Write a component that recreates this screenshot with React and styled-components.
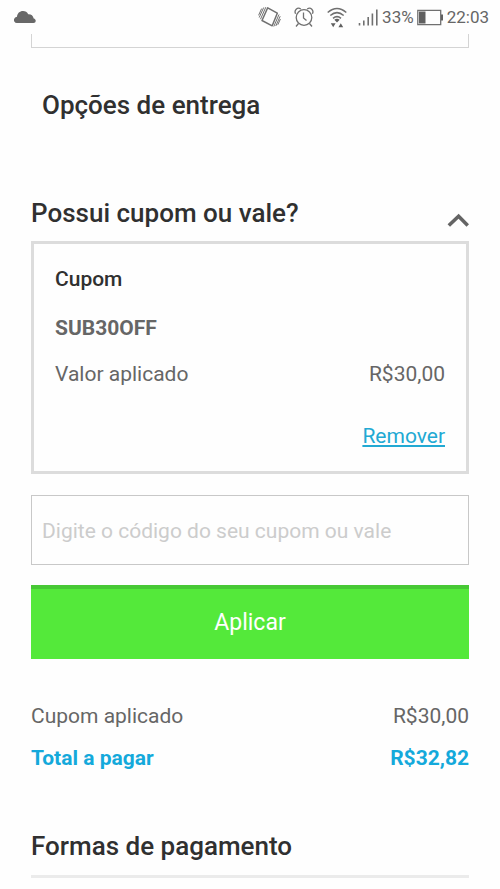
import React, { useState } from 'react';
import styled, { createGlobalStyle } from 'styled-components';

const GlobalStyle = createGlobalStyle`
  * {
    box-sizing: border-box;
  }
  body {
    margin: 0;
    background-color: #fefefe;
    color: #666;
    font-family: Roboto, 'Liberation Sans', sans-serif;
    font-size: 21px;
    line-height: 28px;
  }
`;

const Container = styled.div`
  overflow: hidden;
`;

const StatusBar = styled.header`
  display: flex;
  align-items: center;
  justify-content: space-between;
  height: 34px;
  padding: 0 11px 0 14px;
  font-size: 17px;
  line-height: 20px;
`;

const StatusIcons = styled.div`
  display: flex;
  align-items: center;
`;

const Icon = styled.svg`
  display: block;
  flex: none;
  margin-right: ${(props) => props.$gap || 0}px;
  fill: none;
  stroke: #707070;
`;

const BatteryLevel = styled.span`
  margin-right: 3px;
`;

const Content = styled.main`
  padding: 0 31px;
`;

const AddressEnd = styled.div`
  height: 14px;
  margin-bottom: 41px;
  border: 1px solid #d4d4d4;
  border-top: none;
`;

const Title = styled.h2`
  margin: 0;
  padding-left: ${(props) => (props.$inset ? '11px' : 0)};
  color: #303030;
  font-size: 26px;
  font-weight: 500;
  line-height: 32px;
`;

const CouponHeader = styled.div`
  display: flex;
  align-items: center;
  justify-content: space-between;
  margin: 76px 0 12px;
`;

const ToggleButton = styled.button`
  display: flex;
  padding: 14px 0 0;
  border: none;
  background: none;
  cursor: pointer;
`;

const CouponCard = styled.section`
  padding: 21px 21px;
  border: 3px solid #dcdcdc;
`;

const CouponTitle = styled.h3`
  margin: 0 0 21px;
  color: #303030;
  font-size: 21px;
  font-weight: 500;
`;

const CouponCode = styled.p`
  margin: 0 0 18px;
  font-weight: 700;
`;

const Row = styled.div`
  display: flex;
  justify-content: space-between;
  margin-bottom: ${(props) => (props.$total ? '58px' : '14px')};
  color: ${(props) => (props.$total ? '#14a9db' : '#666')};
  font-weight: ${(props) => (props.$total ? 700 : 400)};
`;

const CardActions = styled.div`
  display: flex;
  justify-content: flex-end;
  padding-top: 20px;
`;

const RemoveLink = styled.a`
  color: #22a9d3;
  text-decoration: underline;
`;

const CouponForm = styled.form`
  display: flex;
  flex-direction: column;
  gap: 20px;
  margin: 21px 0 43px;
`;

const CouponInput = styled.input`
  width: 100%;
  height: 70px;
  padding: 2px 10px 0;
  border: 1px solid #c8c8c8;
  border-radius: 0;
  background: none;
  color: #666;
  font: inherit;

  &::placeholder {
    color: #ccc;
    opacity: 1;
  }
`;

const ApplyButton = styled.button`
  height: 74px;
  padding: 0 0 4px;
  border: none;
  border-top: 4px solid #47c835;
  background-color: #54e93a;
  color: white;
  font-family: inherit;
  font-size: 23px;
  cursor: pointer;
`;

const Hr = styled.hr`
  height: 3px;
  margin: 13px 0 0;
  border: none;
  background-color: #ebebeb;
`;

const CloudIcon = () => (
  <Icon width="22" height="14" viewBox="0 0 22 14">
    <path
      d="M3 13a3 3 0 0 1-2.600-4.600C1 7.300 2.200 7 3 6.800 3.200 3.400 5.700 1 9 1c2.400 0 4.200 1.200 5.200 3.200 2.900-.2 4.900 1.300 5.500 4.200 1.300.4 2 1.200 2 2.400C21.700 12.200 20.800 13 19.500 13z"
      fill="#686868"
      stroke="none"
    />
  </Icon>
);

const VibrateIcon = () => (
  <Icon width="23" height="22" viewBox="0 0 23 22" $gap={13}>
    <path d="M9.700 1.800 19.300 7.200 14.200 19.800 4 14.500z" strokeWidth="1.500" strokeLinejoin="round" />
    <path
      d="M7.800 1.200 2.500 13.200M5.700 1.500 1.200 11.500M3.600 2.600.6 9.300M15.800 20.500 21 8.500M17.800 20 22.200 10.200M19.800 18.800 22.400 13"
      strokeWidth="1"
    />
  </Icon>
);

const AlarmIcon = () => (
  <Icon width="20" height="21" viewBox="0 0 20 21" $gap={13}>
    <circle cx="10" cy="10.500" r="7.800" strokeWidth="1.300" />
    <path
      d="M1.600 6.800C-.2 3.500 3.300-.4 6.800 2M18.400 6.800C20.200 3.500 16.700-.4 13.200 2M4.500 16.500l-2.500 3M15.500 16.500l2.500 3M9.500 5.500v5.500l3 2.500"
      strokeWidth="1.300"
    />
  </Icon>
);

const WifiIcon = () => (
  <Icon width="20" height="21" viewBox="0 0 20 21" $gap={11}>
    <path d="M.7 5.500Q10-2.500 19.300 5.500M3.300 8.500Q10 2.800 16.700 8.500M6 11.300Q10 8 14 11.300" strokeWidth="1.500" />
    <path
      d="M7.300 12.700Q10 10.800 12.700 12.700L10 15.500zM3.800 16.300h4.800L6.200 20.300zM11.400 20.300h4.800l-2.400-4z"
      fill="#606060"
      stroke="none"
    />
  </Icon>
);

const SignalIcon = () => (
  <Icon width="20" height="17" viewBox="0 0 20 17" $gap={4}>
    <path d="M1.500 14v2.500M5.800 11.500v5M10.200 8v8.500M14.400 4.500v12M18.800.5v16" strokeWidth="1.600" />
  </Icon>
);

const BatteryIcon = () => (
  <Icon width="26" height="17" viewBox="0 0 26 17" $gap={4}>
    <path d="M.8 1.300h22.900v14.400H.8z" strokeWidth="1.300" />
    <path d="M2 2.500h6.500v12H2zM24 5.500h2v6h-2z" fill="#606060" stroke="none" />
  </Icon>
);

const ChevronIcon = () => (
  <Icon width="22" height="14" viewBox="0 0 22 14">
    <path d="M1.800 12.500 11.600 3.200l9.200 9.300" stroke="#646464" strokeWidth="3.600" />
  </Icon>
);

const App = () => {
  const [open, setOpen] = useState(true);
  const [code, setCode] = useState('');

  return (
    <>
      <GlobalStyle />
      <Container>
        <StatusBar>
          <CloudIcon />
          <StatusIcons>
            <VibrateIcon />
            <AlarmIcon />
            <WifiIcon />
            <SignalIcon />
            <BatteryLevel>33%</BatteryLevel>
            <BatteryIcon />
            <time>22:03</time>
          </StatusIcons>
        </StatusBar>
        <Content>
          <AddressEnd />
          <Title $inset>Opções de entrega</Title>
          <CouponHeader>
            <Title>Possui cupom ou vale?</Title>
            <ToggleButton
              type="button"
              aria-label="Cupom ou vale"
              aria-expanded={open}
              onClick={() => setOpen(!open)}
            >
              <ChevronIcon />
            </ToggleButton>
          </CouponHeader>
          {open && (
            <>
              <CouponCard>
                <CouponTitle>Cupom</CouponTitle>
                <CouponCode>SUB30OFF</CouponCode>
                <Row>
                  <span>Valor aplicado</span>
                  <span>R$30,00</span>
                </Row>
                <CardActions>
                  <RemoveLink href="#remover">Remover</RemoveLink>
                </CardActions>
              </CouponCard>
              <CouponForm onSubmit={(e) => e.preventDefault()}>
                <CouponInput
                  type="text"
                  aria-label="Código do cupom ou vale"
                  placeholder="Digite o código do seu cupom ou vale"
                  value={code}
                  onChange={(e) => setCode(e.target.value)}
                />
                <ApplyButton type="submit">Aplicar</ApplyButton>
              </CouponForm>
            </>
          )}
          <Row>
            <span>Cupom aplicado</span>
            <span>R$30,00</span>
          </Row>
          <Row $total>
            <span>Total a pagar</span>
            <span>R$32,82</span>
          </Row>
          <Title>Formas de pagamento</Title>
          <Hr />
        </Content>
      </Container>
    </>
  );
};

export default App;
